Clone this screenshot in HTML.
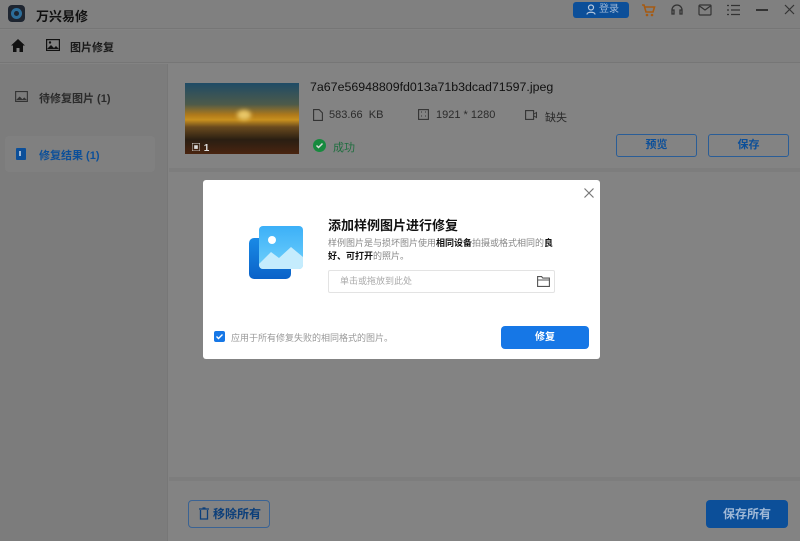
<!DOCTYPE html>
<html><head><meta charset="utf-8"><style>
*{margin:0;padding:0;box-sizing:border-box}
body{width:800px;height:541px;overflow:hidden;background:#838383;font-family:"Liberation Sans","Noto Sans CJK SC",sans-serif;position:relative;color:#111}
.a{position:absolute}
</style></head><body>
<div class="a" style="left:0;top:0;width:800px;height:29px;background:#808080;border-bottom:1px solid #767676"></div>
<div class="a" style="left:8px;top:5px;width:17px;height:17px;border-radius:4px;background:#1e2530"></div>
<div class="a" style="left:11px;top:8px;width:11px;height:11px;border-radius:50%;background:#2c6d99"></div>
<div class="a" style="left:14px;top:11px;width:5px;height:5px;border-radius:50%;background:#1e2530"></div>
<div class="a" style="left:36px;top:6px;font-size:13px;font-weight:bold;color:#111">万兴易修</div>
<div class="a" style="left:573px;top:2px;width:56px;height:16px;border-radius:3px;background:#0c4f99;color:#9fb8d6;font-size:10px;line-height:16px;padding-left:26px">登录</div>
<svg class="a" style="left:586px;top:4px" width="10" height="11" viewBox="0 0 10 11"><circle cx="5" cy="3.5" r="2.5" fill="none" stroke="#b5c7dd" stroke-width="1.2"/><path d="M1 10.5c0-3 8-3 8 0" fill="none" stroke="#b5c7dd" stroke-width="1.2"/></svg>
<svg class="a" style="left:641px;top:4px" width="15" height="13" viewBox="0 0 15 13"><path d="M1 1h2l2 7h7l1.5-5H4" fill="none" stroke="#a65a12" stroke-width="1.6"/><circle cx="6" cy="11" r="1.3" fill="#a65a12"/><circle cx="11" cy="11" r="1.3" fill="#a65a12"/></svg>
<svg class="a" style="left:670px;top:3px" width="14" height="14" viewBox="0 0 14 14"><path d="M2 8V7a5 5 0 0110 0v1M2 7h2v4H2zM10 7h2v4h-2z" fill="none" stroke="#333" stroke-width="1.3"/></svg>
<svg class="a" style="left:698px;top:4px" width="14" height="12" viewBox="0 0 14 12"><rect x="1" y="1" width="12" height="10" rx="1" fill="none" stroke="#333" stroke-width="1.2"/><path d="M1.5 2l5.5 4 5.5-4" fill="none" stroke="#333" stroke-width="1.2"/></svg>
<svg class="a" style="left:727px;top:4px" width="13" height="12" viewBox="0 0 13 12"><path d="M0 1.5h2M4 1.5h9M0 6h2M4 6h9M0 10.5h2M4 10.5h9" stroke="#333" stroke-width="1.2"/></svg>
<div class="a" style="left:756px;top:9px;width:12px;height:1.5px;background:#333"></div>
<svg class="a" style="left:784px;top:4px" width="11" height="11" viewBox="0 0 11 11"><path d="M1 1l9 9M10 1l-9 9" stroke="#333" stroke-width="1.2"/></svg>
<div class="a" style="left:0;top:30px;width:800px;height:33px;background:#808080;border-bottom:1px solid #767676"></div>
<svg class="a" style="left:11px;top:39px" width="14" height="13" viewBox="0 0 14 13"><path d="M7 0L0 6.5h2V13h3.5V9h3v4H12V6.5h2z" fill="#111"/></svg>
<svg class="a" style="left:46px;top:39px" width="14" height="12" viewBox="0 0 14 12"><rect x="0.6" y="0.6" width="12.8" height="10.8" fill="none" stroke="#111" stroke-width="1.2"/><path d="M1 10l4-4 3 3 2-2 3 3z" fill="#111"/><circle cx="4" cy="3.5" r="1.2" fill="#111"/></svg>
<div class="a" style="left:70px;top:39px;font-size:11px;font-weight:bold;color:#1a1a1a">图片修复</div>
<div class="a" style="left:0;top:64px;width:168px;height:477px;background:#7c7c7c;border-right:1px solid #777"></div>
<svg class="a" style="left:15px;top:91px" width="13" height="11" viewBox="0 0 14 12"><rect x="0.6" y="0.6" width="12.8" height="10.8" fill="none" stroke="#333" stroke-width="1.2"/><path d="M1 10l4-4 3 3 2-2 3 3z" fill="#333"/></svg>
<div class="a" style="left:39px;top:90px;font-size:11px;color:#2b2b2b;font-weight:bold">待修复图片 (1)</div>
<div class="a" style="left:5px;top:136px;width:150px;height:36px;background:#808080;border-radius:4px"></div>
<div class="a" style="left:16px;top:148px;width:10px;height:12px;background:#0c4f99;border-radius:1px"></div>
<div class="a" style="left:19px;top:151px;width:2px;height:5px;background:#9fb8d6"></div>
<div class="a" style="left:39px;top:147px;font-size:11px;color:#0c4f99;font-weight:bold">修复结果 (1)</div>
<div class="a" style="left:169px;top:64px;width:631px;height:108px;background:#838383;border-bottom:4px solid #7d7d7d"></div>
<div class="a" style="left:185px;top:83px;width:114px;height:71px;background:linear-gradient(180deg,#1f4b66 0%,#4d5a4a 30%,#b07a1a 45%,#c8901e 52%,#6a4a1e 62%,#2a1e12 80%,#4a2410 100%)"></div>
<div class="a" style="left:237px;top:110px;width:14px;height:10px;border-radius:50%;background:#e8c768;filter:blur(2px)"></div>
<div class="a" style="left:191px;top:139px;font-size:10px;color:#ddd;font-weight:bold">▣ 1</div>
<div class="a" style="left:310px;top:80px;font-size:12.4px;color:#111">7a67e56948809fd013a71b3dcad71597.jpeg</div>
<svg class="a" style="left:313px;top:109px" width="10" height="12" viewBox="0 0 10 12"><path d="M.6.6h5.5l3.3 3.3v7.5H.6z" fill="none" stroke="#333" stroke-width="1.1"/></svg>
<div class="a" style="left:329px;top:109px;font-size:11px;color:#2b2b2b">583.66&nbsp; KB</div>
<svg class="a" style="left:418px;top:109px" width="11" height="11" viewBox="0 0 11 11"><rect x=".6" y=".6" width="9.8" height="9.8" fill="none" stroke="#333" stroke-width="1.1"/><path d="M3 3h1M7 3h1M3 7h1M7 7h1" stroke="#333"/></svg>
<div class="a" style="left:436px;top:109px;font-size:11px;color:#2b2b2b">1921 * 1280</div>
<svg class="a" style="left:525px;top:110px" width="12" height="10" viewBox="0 0 12 10"><rect x=".6" y=".6" width="8" height="8.8" fill="none" stroke="#333" stroke-width="1.1"/><path d="M9 4l2.5-1.5v5L9 6" fill="none" stroke="#333"/></svg>
<div class="a" style="left:545px;top:109px;font-size:11px;color:#2b2b2b">缺失</div>
<div class="a" style="left:313px;top:139px;width:13px;height:13px;border-radius:50%;background:#178a3e"></div>
<svg class="a" style="left:313px;top:139px" width="13" height="13" viewBox="0 0 13 13"><path d="M3.5 6.5l2 2 4-4" fill="none" stroke="#ddd" stroke-width="1.5"/></svg>
<div class="a" style="left:333px;top:139px;font-size:11px;color:#1f6e3f">成功</div>
<div class="a" style="left:616px;top:134px;width:81px;height:23px;border:1px solid #2a5d97;border-radius:3px;font-size:11px;font-weight:bold;color:#0c4f99;text-align:center;line-height:21px">预览</div>
<div class="a" style="left:708px;top:134px;width:81px;height:23px;border:1px solid #2a5d97;border-radius:3px;font-size:11px;font-weight:bold;color:#0c4f99;text-align:center;line-height:21px">保存</div>
<div class="a" style="left:169px;top:477px;width:631px;height:4px;background:#7d7d7d"></div>
<div class="a" style="left:188px;top:500px;width:82px;height:28px;border:1px solid #3a6394;border-radius:4px;font-size:12px;font-weight:bold;color:#0c3f7a;line-height:26px;padding-left:24px">移除所有</div>
<svg class="a" style="left:199px;top:507px" width="10" height="13" viewBox="0 0 10 13"><path d="M0 2h10M3.5 1h3M1.5 3v9h7V3" fill="none" stroke="#0c3f7a" stroke-width="1.3"/></svg>
<div class="a" style="left:706px;top:500px;width:82px;height:28px;background:#0c4f99;border-radius:4px;font-size:12px;font-weight:bold;color:#9fb8d6;text-align:center;line-height:28px">保存所有</div>
<div class="a" style="left:203px;top:180px;width:397px;height:179px;background:#fff;border-radius:3px"></div>
<svg class="a" style="left:584px;top:188px" width="10" height="10" viewBox="0 0 10 10"><path d="M.5.5l9 9M9.5.5l-9 9" stroke="#777" stroke-width="1.2"/></svg>
<svg class="a" style="left:249px;top:226px" width="54" height="54" viewBox="0 0 54 54"><defs><linearGradient id="g1" x1="0" y1="0" x2="0" y2="1"><stop offset="0" stop-color="#1a8ae6"/><stop offset="1" stop-color="#0a62c8"/></linearGradient><linearGradient id="g2" x1="0" y1="0" x2="0" y2="1"><stop offset="0" stop-color="#3cb0f8"/><stop offset="1" stop-color="#6fd0fb"/></linearGradient></defs><rect x="0" y="12" width="42" height="41" rx="5" fill="url(#g1)"/><rect x="10" y="0" width="44" height="43" rx="4" fill="url(#g2)"/><circle cx="23" cy="14" r="4" fill="#fff"/><path d="M10 38l12-12 8 6 12-11 12 10v8a4 4 0 01-4 4H14a4 4 0 01-4-4z" fill="#c5ecfd"/></svg>
<div class="a" style="left:328px;top:215px;font-size:13px;font-weight:bold;color:#111">添加样例图片进行修复</div>
<div class="a" style="left:328px;top:237px;width:232px;font-size:9px;line-height:13px;color:#888">样例图片是与损坏图片使用<b style="color:#111">相同设备</b>拍摄或格式相同的<b style="color:#111">良好、可打开</b>的照片。</div>
<div class="a" style="left:328px;top:270px;width:227px;height:23px;border:1px solid #e3e3e3;border-radius:2px;font-size:9px;color:#aaa;line-height:21px;padding-left:11px">单击或拖放到此处</div>
<svg class="a" style="left:537px;top:276px" width="13" height="11" viewBox="0 0 13 11"><path d="M.6.6h4l1.2 1.5h6.6v8.3H.6zM.6 4h11.8" fill="none" stroke="#555" stroke-width="1.1"/></svg>
<div class="a" style="left:214px;top:331px;width:11px;height:11px;border-radius:2px;background:#1677e6"></div>
<svg class="a" style="left:214px;top:331px" width="11" height="11" viewBox="0 0 11 11"><path d="M2.5 5.5l2 2 4-4" fill="none" stroke="#fff" stroke-width="1.4"/></svg>
<div class="a" style="left:231px;top:331px;font-size:9px;color:#999">应用于所有修复失败的相同格式的图片。</div>
<div class="a" style="left:501px;top:326px;width:88px;height:23px;background:#1677e6;border-radius:4px;font-size:10px;font-weight:bold;color:#fff;text-align:center;line-height:23px">修复</div>
</body></html>
